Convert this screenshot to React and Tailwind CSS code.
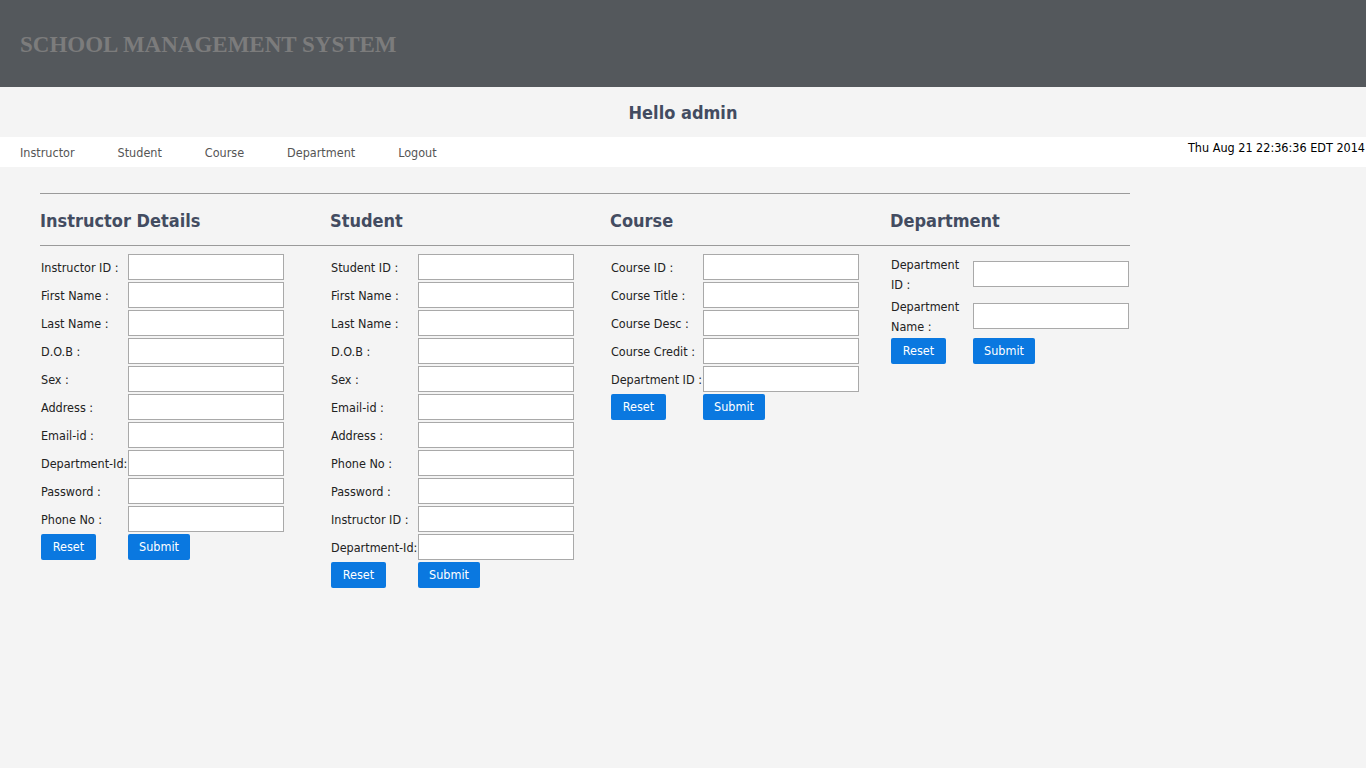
import React from "react";

const font = { fontFamily: "Tahoma, 'DejaVu Sans Condensed', 'DejaVu Sans', sans-serif" };

function Field({ label, lw, tw }) {
  return (
    <div className="flex items-center">
      <div className={`${lw} pl-px text-[12.5px] leading-[20px] text-[#222]`}>
        <div className={`${tw || ""} translate-y-px`}>{label}</div>
      </div>
      <input className="w-[156px] h-[26px] border border-[#a9a9a9] bg-white outline-none" />
    </div>
  );
}

function Buttons({ lw }) {
  return (
    <div className="flex items-center">
      <div className={`${lw} pl-px`}>
        <button className="h-[26px] w-[55px] rounded-[2px] bg-[#0a78e0] text-white text-[12.5px]">Reset</button>
      </div>
      <button className="h-[26px] w-[62px] rounded-[2px] bg-[#0a78e0] text-white text-[12.5px]">Submit</button>
    </div>
  );
}

function Section({ title, width, lw, tw, fields }) {
  return (
    <div className={width}>
      <div className="border-t border-b border-[#9a9a9a] h-[53px] flex items-center pt-[2px]">
        <h2 className="text-[18px] font-bold text-[#434c61]">{title}</h2>
      </div>
      <div className="pt-[8px] flex flex-col gap-[2px]">
        {fields.map((f) => (
          <Field key={f} label={f} lw={lw} tw={tw} />
        ))}
        <Buttons lw={lw} />
      </div>
    </div>
  );
}

export default function App() {
  return (
    <div className="min-h-[768px] bg-[#f4f4f4]" style={font}>
      <header className="h-[87px] bg-[#54585c] flex items-center px-5">
        <h1
          className="text-[23px] font-bold text-[#7c7c7c] pt-[4px]"
          style={{ fontFamily: "'Liberation Serif', serif" }}
        >
          SCHOOL MANAGEMENT SYSTEM
        </h1>
      </header>
      <div className="h-[50px] flex items-center justify-center">
        <div className="text-[18px] font-bold text-[#434c61]">Hello admin</div>
      </div>
      <nav className="h-[30px] bg-white flex items-start justify-between">
        <div className="flex gap-[43px] pl-5 pt-[7px] text-[12.5px] text-[#555]">
          <span>Instructor</span>
          <span>Student</span>
          <span>Course</span>
          <span>Department</span>
          <span>Logout</span>
        </div>
        <div className="pt-[2px] pr-px text-[12.5px] text-black">Thu Aug 21 22:36:36 EDT 2014</div>
      </nav>
      <main className="flex pl-10 pt-[26px]">
        <Section
          title="Instructor Details"
          width="w-[290px]"
          lw="w-[88px]"
          fields={["Instructor ID :", "First Name :", "Last Name :", "D.O.B :", "Sex :", "Address :", "Email-id :", "Department-Id:", "Password :", "Phone No :"]}
        />
        <Section
          title="Student"
          width="w-[280px]"
          lw="w-[88px]"
          fields={["Student ID :", "First Name :", "Last Name :", "D.O.B :", "Sex :", "Email-id :", "Address :", "Phone No :", "Password :", "Instructor ID :", "Department-Id:"]}
        />
        <Section
          title="Course"
          width="w-[280px]"
          lw="w-[93px]"
          fields={["Course ID :", "Course Title :", "Course Desc :", "Course Credit :", "Department ID :"]}
        />
        <Section
          title="Department"
          width="w-[240px]"
          lw="w-[83px]"
          tw="w-[72px]"
          fields={["Department ID :", "Department Name :"]}
        />
      </main>
    </div>
  );
}
